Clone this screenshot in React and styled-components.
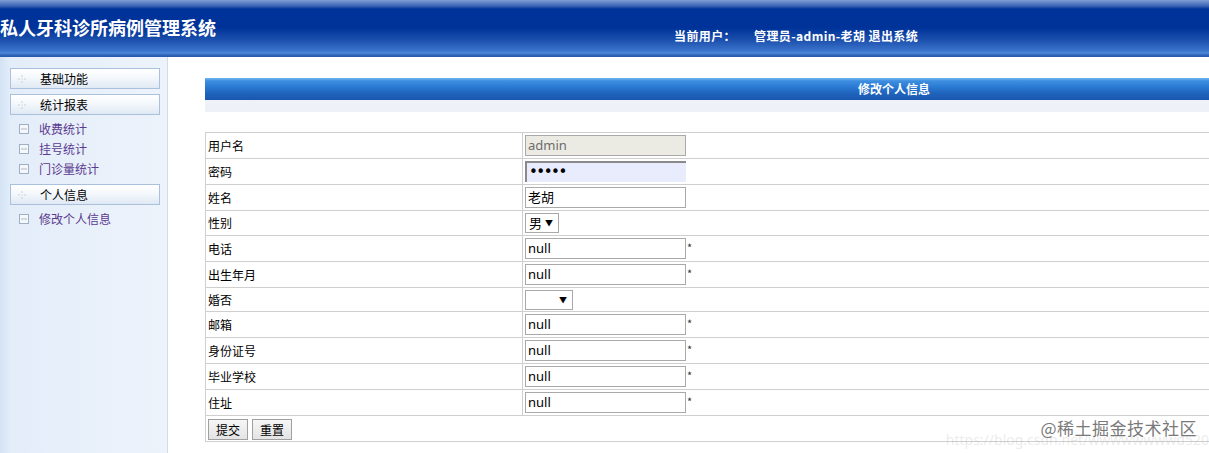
import React from "react";
import styled, { createGlobalStyle } from "styled-components";

const Global = createGlobalStyle`
  html, body {
    margin: 0;
    padding: 0;
    background: #fff;
    overflow: hidden;
  }
  body {
    font-family: "Noto Sans CJK SC", "Noto Sans", sans-serif;
    font-size: 12px;
    color: #000;
  }
`;

const Page = styled.div`
  width: 1209px;
  height: 453px;
  position: relative;
  overflow: hidden;
`;

const Header = styled.div`
  height: 57px;
  display: flex;
  align-items: flex-start;
  background: linear-gradient(
    to bottom,
    #7f9fd4 0px,
    #3a63b3 6px,
    #003399 9px,
    #003399 28px,
    #1c50ad 40px,
    #3a74cc 51px,
    #4d8ad9 53px,
    #2f63b9 55px,
    #2558ad 57px
  );
`;

const Logo = styled.h1`
  margin: 16px 0 0 0;
  font-size: 18px;
  font-weight: bold;
  color: #fff;
  line-height: 22px;
`;

const UserInfo = styled.div`
  margin: 28px 0 0 458px;
  display: flex;
  gap: 18px;
  color: #fff;
  font-weight: bold;
  font-size: 12px;
  line-height: 16px;
  letter-spacing: 0.4px;
`;

const Body = styled.div`
  display: flex;
  height: 396px;
`;

const Sidebar = styled.div`
  width: 168px;
  border-right: 1px solid #d3dbe6;
  background: linear-gradient(to right, #d3e2f4 0px, #e3edf9 10px, #edf3fb 100%);
  padding-top: 11px;
  box-sizing: border-box;
`;

const MenuHead = styled.div`
  margin: 0 0 5px 10px;
  width: 150px;
  height: 21px;
  box-sizing: border-box;
  border: 1px solid #a9c1dc;
  background: linear-gradient(to bottom, #ffffff 0%, #f3f7fc 50%, #dfe8f3 100%);
  display: flex;
  align-items: center;
  padding-left: 7px;
  gap: 14px;
  color: #000;
  line-height: 14px;
`;

const Dots = styled.svg`
  width: 8px;
  height: 8px;
  flex: none;
`;

const SubList = styled.div`
  display: flex;
  flex-direction: column;
  margin-top: -1px;
  padding-bottom: 5px;
`;

const SubItem = styled.div`
  height: 20px;
  display: flex;
  align-items: center;
  padding-left: 19px;
  gap: 10px;
  color: #5b3a8f;
  line-height: 14px;
`;

const BoxIcon = styled.svg`
  width: 10px;
  height: 10px;
  flex: none;
`;

const Content = styled.div`
  flex: 1;
  padding: 21px 0 0 37px;
  overflow: hidden;
`;

const TitleBar = styled.div`
  width: 1100px;
  height: 22px;
  background: linear-gradient(
    to bottom,
    #6db6ef 0px,
    #3d8ee0 3px,
    #2a7ad4 9px,
    #1f64bd 15px,
    #1a57ae 22px
  );
  color: #fff;
  font-weight: bold;
  line-height: 22px;
  padding-left: 653px;
  box-sizing: border-box;
`;

const Band = styled.div`
  width: 1100px;
  height: 12px;
  background: #eef2f8;
  margin-bottom: 20px;
`;

const Table = styled.table`
  border-collapse: collapse;
  width: 1100px;
  table-layout: fixed;
`;

const Row = styled.tr`
  height: ${({ $h }) => $h || 26}px;
`;

const Label = styled.td`
  width: 314px;
  border: 1px solid #cfcfcf;
  padding: 0 0 0 2px;
  vertical-align: middle;
  line-height: 14px;
`;

const Cell = styled.td`
  border: 1px solid #cfcfcf;
  padding: 0 0 0 2px;
  vertical-align: middle;
`;

const Field = styled.div`
  display: flex;
  align-items: flex-start;
  gap: 1px;
`;

const Input = styled.div`
  width: 161px;
  height: 21px;
  box-sizing: border-box;
  border: ${({ $variant }) =>
    $variant === "pwd" ? "none" : "1px solid #a9a9a9"};
  border-top: ${({ $variant }) =>
    $variant === "pwd" ? "2px solid #8a8a8a" : undefined};
  border-left: ${({ $variant }) =>
    $variant === "pwd" ? "2px solid #8a8a8a" : undefined};
  background: ${({ $variant }) =>
    $variant === "disabled" ? "#ebebe4" : $variant === "pwd" ? "#e8ecfc" : "#fff"};
  color: ${({ $variant }) => ($variant === "disabled" ? "#6d6d6d" : "#000")};
  font-family: "Noto Sans", "Noto Sans CJK SC", sans-serif;
  font-size: 13px;
  line-height: 19px;
  padding-left: 2px;
  display: flex;
  align-items: center;
  white-space: nowrap;
  overflow: hidden;
`;

const PwdDots = styled.span`
  font-family: "DejaVu Sans", sans-serif;
  font-size: 15px;
  letter-spacing: -1.5px;
`;

const Star = styled.span`
  font-size: 11px;
  line-height: 12px;
  margin-top: 3px;
  color: #333;
`;

const Select = styled.div`
  width: ${({ $w }) => $w}px;
  height: 20px;
  box-sizing: border-box;
  border: 1px solid #a9a9a9;
  background: #fff;
  display: flex;
  align-items: center;
  justify-content: space-between;
  padding: 0 5px 0 3px;
  font-size: 13px;
  line-height: 18px;
`;

const Arrow = styled.span`
  font-size: 8px;
  line-height: 10px;
`;

const Button = styled.button`
  height: 21px;
  width: 40px;
  border: 1px solid #a0a0a0;
  background: linear-gradient(to bottom, #f6f6f6, #e4e4e4);
  font-family: "Noto Sans CJK SC", sans-serif;
  font-size: 12px;
  padding: 0;
  margin-right: 4px;
  line-height: 19px;
  color: #000;
`;

const Buttons = styled.td`
  border: 1px solid #cfcfcf;
  padding: 1px 0 0 2px;
`;

const Watermark = styled.div`
  position: absolute;
  right: 12px;
  bottom: 13px;
  font-size: 17px;
  color: #7a7a7a;
  letter-spacing: 0.5px;
`;

const WatermarkUrl = styled.div`
  position: absolute;
  right: 0px;
  bottom: 4px;
  font-family: "Noto Sans", sans-serif;
  font-size: 14px;
  color: rgba(150, 150, 150, 0.2);
`;

const DotIcon = () => (
  <Dots viewBox="0 0 8 8">
    <rect x="3.5" y="0.5" width="1" height="1" fill="#9aa8b8" />
    <rect x="0.5" y="3.5" width="1" height="1" fill="#9aa8b8" />
    <rect x="6.5" y="3.5" width="1" height="1" fill="#9aa8b8" />
    <rect x="3.5" y="6.5" width="1" height="1" fill="#9aa8b8" />
    <rect x="3.5" y="3.5" width="1" height="1" fill="#b8c4d2" />
  </Dots>
);

const SubIcon = () => (
  <BoxIcon viewBox="0 0 10 10">
    <rect x="0.5" y="0.5" width="9" height="9" fill="#f4f7fb" stroke="#9fb0c4" />
    <rect x="2.5" y="4.5" width="1" height="1" fill="#6f7f92" />
    <rect x="4.5" y="4.5" width="1" height="1" fill="#6f7f92" />
    <rect x="6.5" y="4.5" width="1" height="1" fill="#6f7f92" />
  </BoxIcon>
);

const menus = [
  { title: "基础功能", items: [] },
  { title: "统计报表", items: ["收费统计", "挂号统计", "门诊量统计"] },
  { title: "个人信息", items: ["修改个人信息"] },
];

const fields = [
  { label: "用户名", value: "admin", variant: "disabled" },
  { label: "密码", value: "•••••", variant: "pwd" },
  { label: "姓名", value: "老胡" },
  { label: "性别", select: "男", w: 34, h: 25 },
  { label: "电话", value: "null", star: true },
  { label: "出生年月", value: "null", star: true },
  { label: "婚否", select: "", w: 48, h: 24 },
  { label: "邮箱", value: "null", star: true },
  { label: "身份证号", value: "null", star: true },
  { label: "毕业学校", value: "null", star: true },
  { label: "住址", value: "null", star: true },
];

export default function App() {
  return (
    <Page>
      <Global />
      <Header>
        <Logo>私人牙科诊所病例管理系统</Logo>
        <UserInfo>
          <span>当前用户：</span>
          <span>管理员-admin-老胡 退出系统</span>
        </UserInfo>
      </Header>
      <Body>
        <Sidebar>
          {menus.map((m) => (
            <React.Fragment key={m.title}>
              <MenuHead>
                <DotIcon />
                {m.title}
              </MenuHead>
              {m.items.length > 0 && (
                <SubList>
                  {m.items.map((it) => (
                    <SubItem key={it}>
                      <SubIcon />
                      {it}
                    </SubItem>
                  ))}
                </SubList>
              )}
            </React.Fragment>
          ))}
        </Sidebar>
        <Content>
          <TitleBar>修改个人信息</TitleBar>
          <Band />
          <Table>
            <tbody>
              {fields.map((f) => (
                <Row key={f.label} $h={f.h}>
                  <Label>{f.label}</Label>
                  <Cell>
                    {f.select !== undefined ? (
                      <Select $w={f.w}>
                        <span>{f.select}</span>
                        <Arrow>▼</Arrow>
                      </Select>
                    ) : (
                      <Field>
                        <Input $variant={f.variant}>
                          {f.variant === "pwd" ? <PwdDots>{f.value}</PwdDots> : f.value}
                        </Input>
                        {f.star && <Star>*</Star>}
                      </Field>
                    )}
                  </Cell>
                </Row>
              ))}
              <Row>
                <Buttons colSpan={2}>
                  <Button>提交</Button>
                  <Button>重置</Button>
                </Buttons>
              </Row>
            </tbody>
          </Table>
        </Content>
      </Body>
      <WatermarkUrl>https://blog.csdn.net/wwwwwwwwd520</WatermarkUrl>
      <Watermark>@稀土掘金技术社区</Watermark>
    </Page>
  );
}
